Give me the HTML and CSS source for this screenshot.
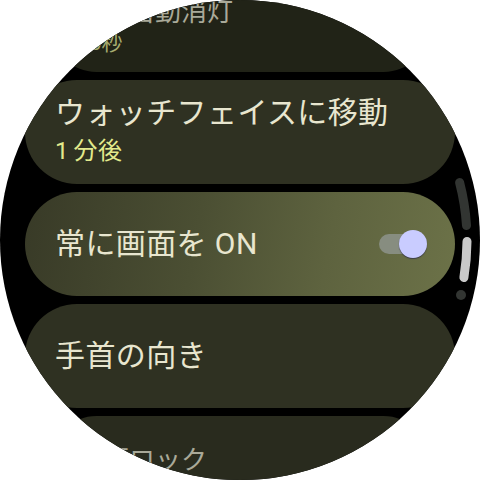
FILE: index.html
```html
<!DOCTYPE html>
<html lang="ja">
<head>
<meta charset="utf-8">
<link rel="stylesheet" href="styles.css">
</head>
<body>
<div class="watch">
  <div class="list">
    <div class="card card-edge card-top">
      <div class="title">画面自動消灯</div>
      <div class="sub">15秒</div>
    </div>
    <div class="card">
      <div class="title">ウォッチフェイスに移動</div>
      <div class="sub">1 分後</div>
    </div>
    <div class="card card-on">
      <div class="title">常に画面を ON</div>
      <div class="toggle"><span class="track"></span><span class="thumb"></span></div>
    </div>
    <div class="card">
      <div class="title">手首の向き</div>
    </div>
    <div class="card card-edge card-bottom">
      <div class="title">画面ロック</div>
    </div>
  </div>
  <svg class="scroll" width="480" height="480" viewBox="0 0 480 480">
    <path d="M 459.6 182.5 A 227 227 0 0 1 466.5 225.5" class="sc-track"/>
    <path d="M 467 241.5 A 227 227 0 0 1 463.9 277.5" class="sc-thumb"/>
    <circle cx="461" cy="295" r="5" class="sc-dot"/>
  </svg>
</div>
</body>
</html>
```
FILE: styles.css
```css
html, body {
  margin: 0;
  padding: 0;
  background: #ffffff;
}
body {
  font-family: Roboto, "Noto Sans CJK JP", "Noto Sans", sans-serif;
}
.watch {
  position: relative;
  width: 480px;
  height: 480px;
  border-radius: 50%;
  overflow: hidden;
  background: #000000;
}
.list {
  display: flex;
  flex-direction: column;
  align-items: center;
  gap: 8px;
  margin-top: -19px;
}
.card {
  box-sizing: border-box;
  width: 430px;
  height: 104px;
  flex: none;
  border-radius: 52px;
  background: #2f3122;
  padding: 0 30px;
  display: flex;
  flex-direction: column;
  justify-content: center;
}
.title {
  font-size: 30px;
  line-height: 38px;
  color: #e8e6cf;
  white-space: nowrap;
  letter-spacing: 0.4px;
}
.sub {
  font-size: 24px;
  line-height: 38px;
  color: #e2ea8c;
  letter-spacing: 0.5px;
  word-spacing: -2px;
}
.card-edge {
  width: 378px;
  height: 91px;
  border-radius: 46px;
  padding: 0 26px;
}
.card-edge .title {
  font-size: 26px;
  line-height: 31px;
  color: #a9a999;
  letter-spacing: 0;
}
.card-edge .sub {
  font-size: 21px;
  line-height: 31px;
  color: #a6ab70;
}
.card-top {
  background: #212317;
  padding-top: 2px;
}
.card-bottom {
  background: #292b1e;
  justify-content: flex-start;
  padding-top: 29px;
}
.card-on {
  flex-direction: row;
  align-items: center;
  justify-content: space-between;
  padding-right: 28px;
  background: linear-gradient(100deg, #383a27 0%, #4b4f33 40%, #5e633f 70%, #6c7248 100%);
}
.toggle {
  position: relative;
  width: 48px;
  height: 28px;
  display: flex;
  align-items: center;
}
.track {
  display: block;
  width: 42px;
  height: 20px;
  border-radius: 10px;
  background: #878d80;
}
.thumb {
  position: absolute;
  right: 0;
  top: 0;
  width: 28px;
  height: 28px;
  border-radius: 50%;
  background: #c9ccff;
  box-shadow: 0 1px 1px rgba(40, 40, 70, 0.7);
}
.scroll {
  position: absolute;
  left: 0;
  top: 0;
  pointer-events: none;
}
.sc-track {
  fill: none;
  stroke: #323532;
  stroke-width: 9;
  stroke-linecap: round;
}
.sc-thumb {
  fill: none;
  stroke: #c9c9c9;
  stroke-width: 9;
  stroke-linecap: round;
}
.sc-dot {
  fill: #323532;
}
```
